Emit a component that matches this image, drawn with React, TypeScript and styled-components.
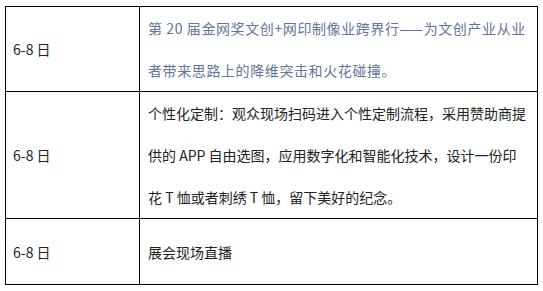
import React from 'react';
import styled, { createGlobalStyle } from 'styled-components';

const GlobalStyle = createGlobalStyle`
    body {
        margin: 0;
        background: #fff;
        font-family: "Noto Sans CJK SC", "Noto Sans", sans-serif;
    }
`;

// 표 바깥 여백
const Page = styled.div`
    padding: 6px 5px;
`;

const Table = styled.table`
    width: 533px;
    border-collapse: collapse;
    table-layout: fixed;
`;

const Row = styled.tr<{ $height: number }>`
    height: ${(p) => p.$height}px;
`;

const DateCell = styled.td`
    width: 119px;
    border: 1px solid #000;
    padding: 0 7px;
    font-size: 14px;
    line-height: 42px;
    color: #222;
    vertical-align: middle;
`;

// 강조 행은 파란 회색 글씨, 자간 조금 넓게
const TextCell = styled.td<{ $accent?: boolean }>`
    border: 1px solid #000;
    padding: 0 8px;
    font-size: 14px;
    line-height: 42px;
    color: ${(p) => (p.$accent ? '#63759b' : '#222')};
    letter-spacing: ${(p) => (p.$accent ? '0.6px' : '0')};
    vertical-align: middle;
`;

const rows = [
    {
        date: '6-8 日',
        text: '第 20 届金网奖文创+网印制像业跨界行——为文创产业从业者带来思路上的降维突击和火花碰撞。',
        accent: true,
        height: 85,
    },
    {
        date: '6-8 日',
        text: '个性化定制：观众现场扫码进入个性定制流程，采用赞助商提供的 APP 自由选图，应用数字化和智能化技术，设计一份印花 T 恤或者刺绣 T 恤，留下美好的纪念。',
        accent: false,
        height: 127,
    },
    {
        date: '6-8 日',
        text: '展会现场直播',
        accent: false,
        height: 66,
    },
];

const App = () => (
    <Page>
        <GlobalStyle />
        <Table>
            <tbody>
                {rows.map((r, i) => (
                    <Row key={i} $height={r.height}>
                        <DateCell>{r.date}</DateCell>
                        <TextCell $accent={r.accent}>{r.text}</TextCell>
                    </Row>
                ))}
            </tbody>
        </Table>
    </Page>
);

export default App;
